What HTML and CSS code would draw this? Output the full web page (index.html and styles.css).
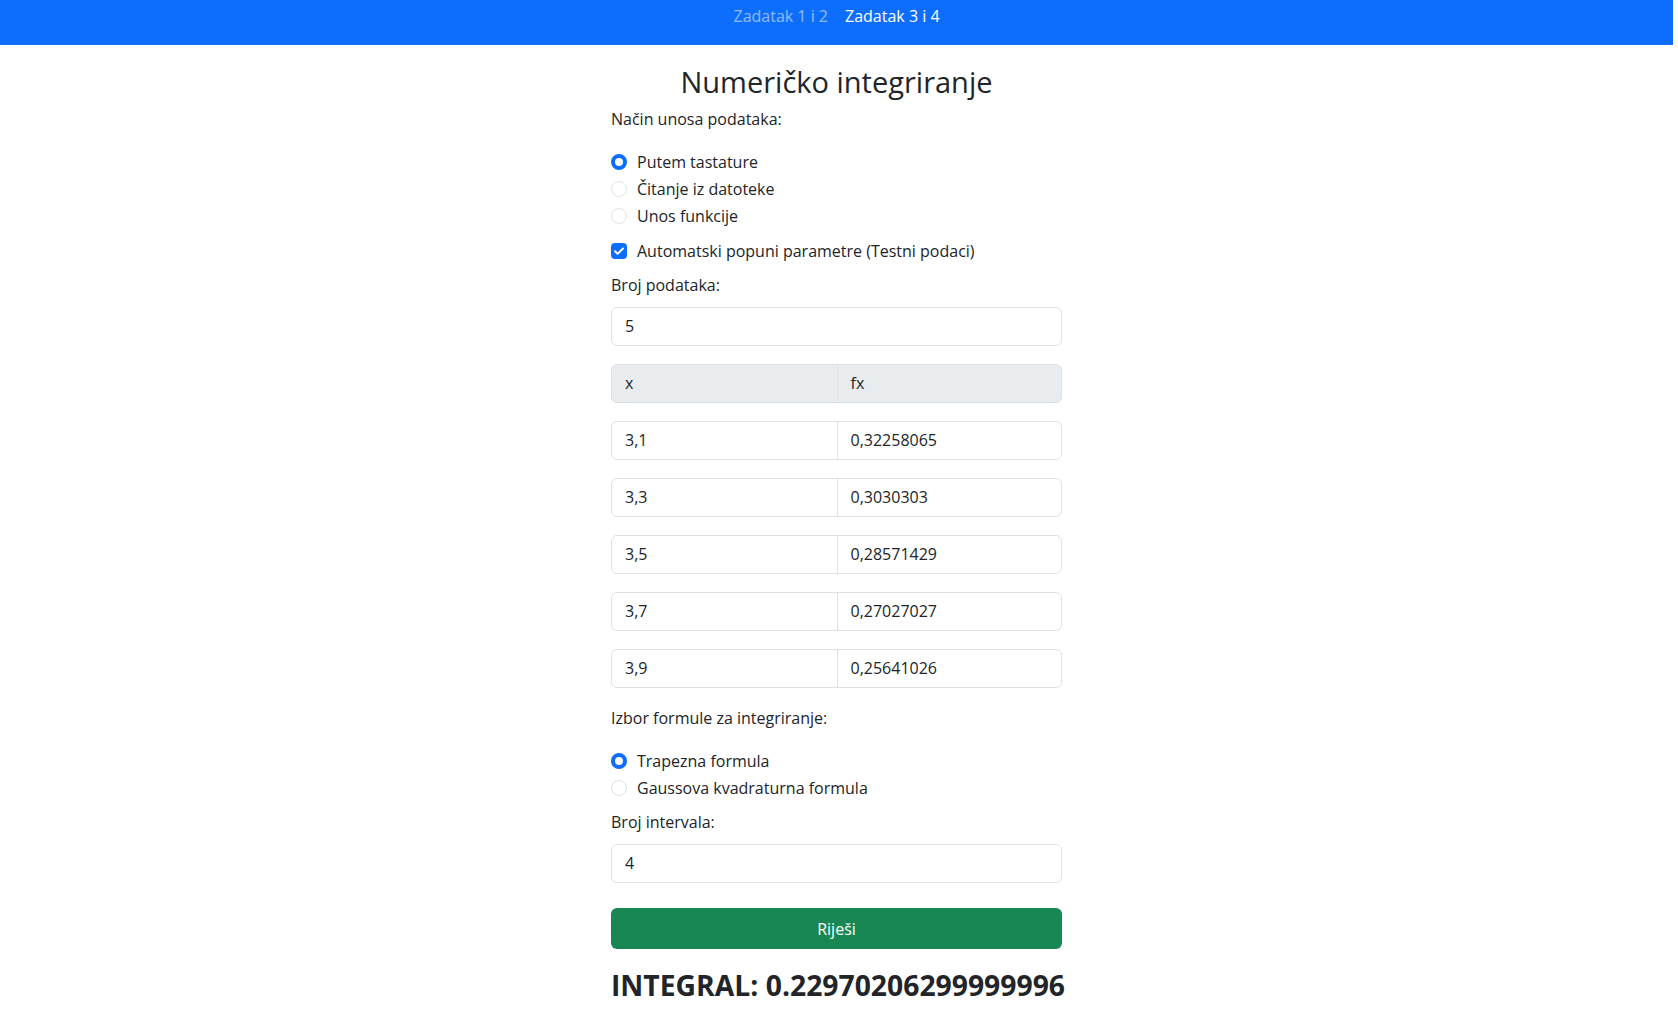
FILE: index.html
```html
<!DOCTYPE html>
<html lang="hr">
<head>
<meta charset="utf-8">
<title>Numeričko integriranje</title>
<link rel="stylesheet" href="styles.css">
</head>
<body>
<nav class="navbar">
  <a class="nav-link" href="#">Zadatak 1 i 2</a>
  <a class="nav-link active" href="#">Zadatak 3 i 4</a>
</nav>
<main class="container">
  <h2 class="title">Numeričko integriranje</h2>
  <p class="label first">Način unosa podataka:</p>
  <div class="radio-group">
    <label class="check"><span class="radio checked"></span>Putem tastature</label>
    <label class="check"><span class="radio"></span>Čitanje iz datoteke</label>
    <label class="check"><span class="radio"></span>Unos funkcije</label>
  </div>
  <label class="check auto"><span class="checkbox"><svg viewBox="0 0 16 16" width="16" height="16"><path d="M4 8.3l2.6 2.6L12 5.5" fill="none" stroke="#fff" stroke-width="2" stroke-linecap="round" stroke-linejoin="round"/></svg></span>Automatski popuni parametre (Testni podaci)</label>
  <p class="label">Broj podataka:</p>
  <div class="input">5</div>
  <div class="pair header"><div class="cell">x</div><div class="cell">fx</div></div>
  <div class="pair"><div class="cell">3,1</div><div class="cell">0,32258065</div></div>
  <div class="pair"><div class="cell">3,3</div><div class="cell">0,3030303</div></div>
  <div class="pair"><div class="cell">3,5</div><div class="cell">0,28571429</div></div>
  <div class="pair"><div class="cell">3,7</div><div class="cell">0,27027027</div></div>
  <div class="pair"><div class="cell">3,9</div><div class="cell">0,25641026</div></div>
  <p class="label formula">Izbor formule za integriranje:</p>
  <div class="radio-group">
    <label class="check"><span class="radio checked"></span>Trapezna formula</label>
    <label class="check"><span class="radio"></span>Gaussova kvadraturna formula</label>
  </div>
  <p class="label intervals">Broj intervala:</p>
  <div class="input">4</div>
  <button class="btn-solve" type="button">Riješi</button>
  <h3 class="result">INTEGRAL: 0.22970206299999996</h3>
</main>
</body>
</html>
```
FILE: styles.css
```css
* { box-sizing: border-box; }
html, body { margin: 0; padding: 0; }
body {
  font-family: "Open Sans", "Noto Sans", sans-serif;
  font-size: 16px;
  line-height: 24px;
  color: #212529;
  background: #fff;
  padding-right: 5px;
}
.navbar {
  height: 45px;
  background: #0d6efd;
  display: flex;
  justify-content: center;
  gap: 17px;
  padding-top: 4px;
}
.nav-link {
  color: rgba(255,255,255,0.55);
  text-decoration: none;
  font-size: 16px;
  line-height: 24px;
}
.nav-link.active { color: #fff; }
.container {
  width: 451px;
  margin: 0 auto;
  display: flex;
  flex-direction: column;
}
.title {
  margin: 18px 0 0;
  font-size: 29px;
  font-weight: 500;
  line-height: 38px;
  text-align: center;
}
.label { margin: 0; }
.label.first { margin-top: 6px; }
.radio-group {
  display: flex;
  flex-direction: column;
  gap: 3px;
  margin-top: 19px;
}
.check {
  display: flex;
  align-items: center;
  gap: 10px;
  height: 24px;
  white-space: nowrap;
}
.radio {
  width: 16px;
  height: 16px;
  border-radius: 50%;
  border: 1px solid #dee2e6;
  background: #fff;
  flex: none;
}
.radio.checked {
  border: 4.5px solid #0d6efd;
  background: #fff;
}
.checkbox {
  width: 16px;
  height: 16px;
  border-radius: 4px;
  background: #0d6efd;
  flex: none;
  display: flex;
}
.check.auto { margin-top: 11px; }
.auto + .label { margin-top: 10px; }
.input {
  height: 39px;
  margin-top: 10px;
  border: 1px solid #dee2e6;
  border-radius: 6px;
  padding: 6px 13px;
  line-height: 25px;
}
.pair {
  display: grid;
  grid-template-columns: 1fr 1fr;
  height: 39px;
  margin-top: 18px;
  border: 1px solid #dee2e6;
  border-radius: 6px;
  overflow: hidden;
}
.pair .cell {
  padding: 6px 13px;
  line-height: 25px;
}
.pair .cell + .cell { border-left: 1px solid #dee2e6; }
.pair.header { background: #e9ecef; }
.label.formula { margin-top: 18px; }
.label.intervals { margin-top: 10px; }
.btn-solve {
  margin-top: 25px;
  height: 41px;
  width: 100%;
  border: none;
  border-radius: 6px;
  background: #198754;
  color: #fff;
  font-family: inherit;
  font-size: 16px;
}
.result {
  margin: 19px 0 0;
  font-size: 28.3px;
  font-weight: 700;
  line-height: 34px;
  text-align: center;
  white-space: nowrap;
}
```
